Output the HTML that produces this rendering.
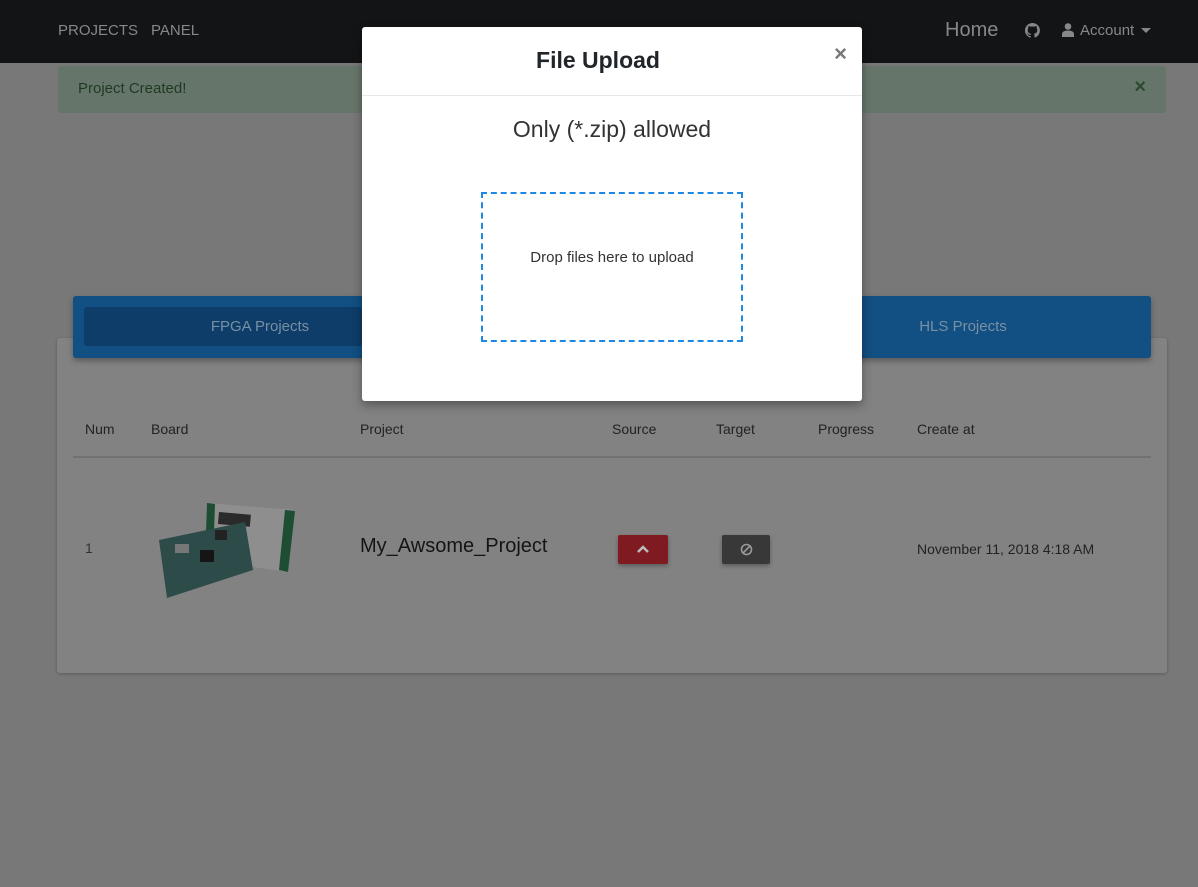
<!DOCTYPE html>
<html><head><meta charset="utf-8"><style>
*{box-sizing:border-box;margin:0;padding:0}
body{width:1198px;height:887px;background:#787878;font-family:"Liberation Sans",sans-serif;position:relative;overflow:hidden;color:#1a1a1a}
.nav{position:absolute;left:0;top:0;width:1198px;height:63px;background:#131416}
.nav span{position:absolute;color:#85878a;font-size:15px}
.alert{position:absolute;left:58px;top:66px;width:1108px;height:47px;background:#66756a;border-radius:3px}
.alert .t{position:absolute;left:20px;top:14px;color:#1f3a22;font-size:15px}
.alert .x{position:absolute;right:20px;top:10px;color:#2b4a30;font-size:20px;font-weight:bold}
.card{position:absolute;left:57px;top:338px;width:1110px;height:335px;background:#828282;border-radius:3px;box-shadow:0 1px 3px rgba(0,0,0,.25)}
.tabs{position:absolute;left:73px;top:296px;width:1078px;height:62px;background:#124f82;border-radius:3px;box-shadow:0 3px 6px rgba(0,0,0,.3)}
.tab{position:absolute;top:11px;height:39px;border-radius:3px;color:#7890a4;font-size:15px;text-align:center;line-height:39px}
.th{position:absolute;top:421px;font-size:14px;color:#222}
.line{position:absolute;left:73px;top:456px;width:1078px;height:2px;background:#717171}
.modal{position:absolute;left:362px;top:27px;width:500px;height:374px;background:#fff;border-radius:3px;box-shadow:0 4px 10px rgba(0,0,0,.35)}
.modal h1{position:absolute;left:0;width:472px;top:20px;text-align:center;font-size:23px;font-weight:bold;color:#212529}
.modal .cl{position:absolute;right:15px;top:14px;font-size:22px;font-weight:bold;color:#777}
.modal .hr{position:absolute;left:0;top:68px;width:500px;height:1px;background:#e5e7ea}
.modal .sub{position:absolute;left:0;width:500px;top:89px;text-align:center;font-size:23px;color:#333}
.drop{position:absolute;left:119px;top:165px;width:262px;height:150px;border:2px dashed #1e88e5;text-align:center;line-height:128px;font-size:15px;color:#333}
</style></head><body>
<div class="nav">
<span style="left:58px;top:22px">PROJECTS</span>
<span style="left:151px;top:22px">PANEL</span>
<span style="left:945px;top:19px;font-size:20px">Home</span>
<svg style="position:absolute;left:1025px;top:23px" width="15" height="15" viewBox="0 0 16 16"><path fill="#85878a" d="M8 0a8 8 0 0 0-2.5 15.6c.4 0 .5-.2.5-.4v-1.5c-2.2.5-2.7-1-2.7-1-.4-.9-.9-1.2-.9-1.2-.7-.5.1-.5.1-.5.8.1 1.2.8 1.2.8.7 1.3 1.9.9 2.3.7.1-.5.3-.9.5-1.1-1.8-.2-3.6-.9-3.6-4 0-.9.3-1.6.8-2.1-.1-.2-.4-1 .1-2.1 0 0 .7-.2 2.2.8a7.6 7.6 0 0 1 4 0c1.5-1 2.2-.8 2.2-.8.4 1.1.2 1.9.1 2.1.5.6.8 1.3.8 2.1 0 3.1-1.9 3.8-3.6 4 .3.3.6.8.6 1.5v2.2c0 .2.1.5.6.4A8 8 0 0 0 8 0z"/></svg>
<svg style="position:absolute;left:1062px;top:23px" width="12" height="14" viewBox="0 0 12 14"><circle cx="6" cy="3.5" r="3.3" fill="#85878a"/><path d="M0 14v-3c0-2 2-3.5 6-3.5s6 1.5 6 3.5v3z" fill="#85878a"/></svg>
<span style="left:1080px;top:22px">Account</span>
<svg style="position:absolute;left:1141px;top:28px" width="10" height="6"><path d="M0 0h10L5 5z" fill="#85878a"/></svg>
</div>
<div class="alert"><span class="t">Project Created!</span><span class="x">×</span></div>
<div class="card"></div>
<div class="tabs">
<div class="tab" style="left:11px;width:278px;background:#0d3d68;padding-left:74px">FPGA Projects</div>
<div class="tab" style="left:790px;width:200px;">HLS Projects</div>
</div>
<span class="th" style="left:85px">Num</span>
<span class="th" style="left:151px">Board</span>
<span class="th" style="left:360px">Project</span>
<span class="th" style="left:612px">Source</span>
<span class="th" style="left:716px">Target</span>
<span class="th" style="left:818px">Progress</span>
<span class="th" style="left:917px">Create at</span>
<div class="line"></div>
<span style="position:absolute;left:85px;top:540px;font-size:14px;color:#333">1</span>
<svg style="position:absolute;left:155px;top:500px" width="145" height="100" viewBox="0 0 145 100">
<polygon points="52,3 140,10 133,72 50,60" fill="#8e8e8e"/><polygon points="52,3 60,4 58,62 50,60" fill="#1d4d33"/><polygon points="130,10 140,11 133,72 124,70" fill="#1d4d33"/>
<rect x="64" y="12" width="32" height="12" fill="#2a2a2a" transform="rotate(5 64 12)"/>
<polygon points="4,40 90,22 98,70 12,98" fill="#2d4b48"/><rect x="45" y="50" width="14" height="12" fill="#151515"/><rect x="20" y="44" width="14" height="9" fill="#777"/><rect x="60" y="30" width="12" height="10" fill="#222"/></svg>
<span style="position:absolute;left:360px;top:535px;font-size:20px;color:#151515">My_Awsome_Project</span>
<div style="position:absolute;left:618px;top:535px;width:50px;height:29px;background:#7f1b20;border-radius:2px;box-shadow:0 2px 4px rgba(0,0,0,.3)"><svg style="position:absolute;left:18px;top:10px" width="14" height="9"><path d="M2 7l5-5 5 5" stroke="#bbb" stroke-width="2.5" fill="none"/></svg></div>
<div style="position:absolute;left:722px;top:535px;width:48px;height:29px;background:#383838;border-radius:2px;box-shadow:0 2px 4px rgba(0,0,0,.3)"><svg style="position:absolute;left:18px;top:8px" width="13" height="13"><circle cx="6.5" cy="6.5" r="5" stroke="#999" stroke-width="1.6" fill="none"/><path d="M3 10L10 3" stroke="#999" stroke-width="1.6"/></svg></div>
<span style="position:absolute;left:917px;top:541px;font-size:14px;color:#222">November 11, 2018 4:18 AM</span>
<div class="modal">
<h1>File Upload</h1><span class="cl">×</span><div class="hr"></div>
<div class="sub">Only (*.zip) allowed</div>
<div class="drop">Drop files here to upload</div>
</div>
</body></html>
